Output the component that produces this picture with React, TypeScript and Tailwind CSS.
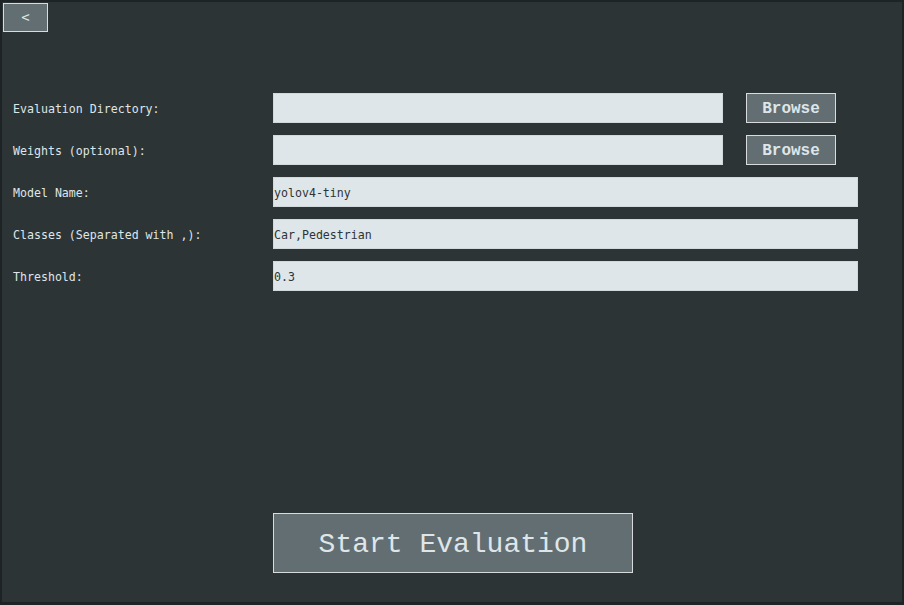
import React from "react";

const labelFont = "font-['DejaVu_Sans_Mono',monospace] text-[11.6px] text-[#dfe6e9]";
const inputCls =
	"h-[30px] bg-[#dfe6e9] border border-[#d2d9dc] px-0 pt-[2px] text-[11.6px] text-[#2d3436] font-['DejaVu_Sans_Mono',monospace] outline-none";
const courier = "font-['Courier_New','Nimbus_Mono_PS','FreeMono','Liberation_Mono',monospace]";
const browseCls = `w-[90px] h-[30px] pt-[2px] bg-[#636e72] border border-[#d8dcdd] text-[#dfe6e9] ${courier} font-bold text-[16px]`;

type Row = { label: string; value: string; browse?: boolean };

const rows: Row[] = [
	{ label: "Evaluation Directory:", value: "", browse: true },
	{ label: "Weights (optional):", value: "", browse: true },
	{ label: "Model Name:", value: "yolov4-tiny" },
	{ label: "Classes (Separated with ,):", value: "Car,Pedestrian" },
	{ label: "Threshold:", value: "0.3" },
];

// Evaluation settings screen
export default function App() {
	return (
		<div className="w-[904px] h-[605px] bg-[#1e2325] pl-[2px] pt-[2px] pr-[2px] pb-[3px]">
			<div className="w-full h-full bg-[#2d3436] flex flex-col">
				{/* Back */}
				<div className="pl-[1px] pt-[1px]">
					<button className="w-[45px] h-[29px] bg-[#636e72] border border-[#d8dcdd] text-[#dfe6e9] font-['DejaVu_Sans_Mono',monospace] text-[14px] flex items-center justify-center">
						&lt;
					</button>
				</div>

				{/* Form */}
				<div className="mt-[61px] pl-[11px] flex flex-col gap-[12px]">
					{rows.map((r) => (
						<div key={r.label} className="flex items-center h-[30px]">
							<div className={`w-[260px] pt-[3px] ${labelFont}`}>{r.label}</div>
							{r.browse ? (
								<>
									<input readOnly value={r.value} className={`${inputCls} w-[450px]`} />
									<button className={`ml-[23px] ${browseCls}`}>Browse</button>
								</>
							) : (
								<input readOnly value={r.value} className={`${inputCls} w-[585px]`} />
							)}
						</div>
					))}
				</div>

				{/* Start */}
				<div className="mt-auto mb-[29px] pl-[271px]">
					<button className={`w-[360px] h-[60px] pt-[3px] bg-[#636e72] border border-[#d8dcdd] text-[#dfe6e9] ${courier} text-[28px]`}>
						Start Evaluation
					</button>
				</div>
			</div>
		</div>
	);
}
